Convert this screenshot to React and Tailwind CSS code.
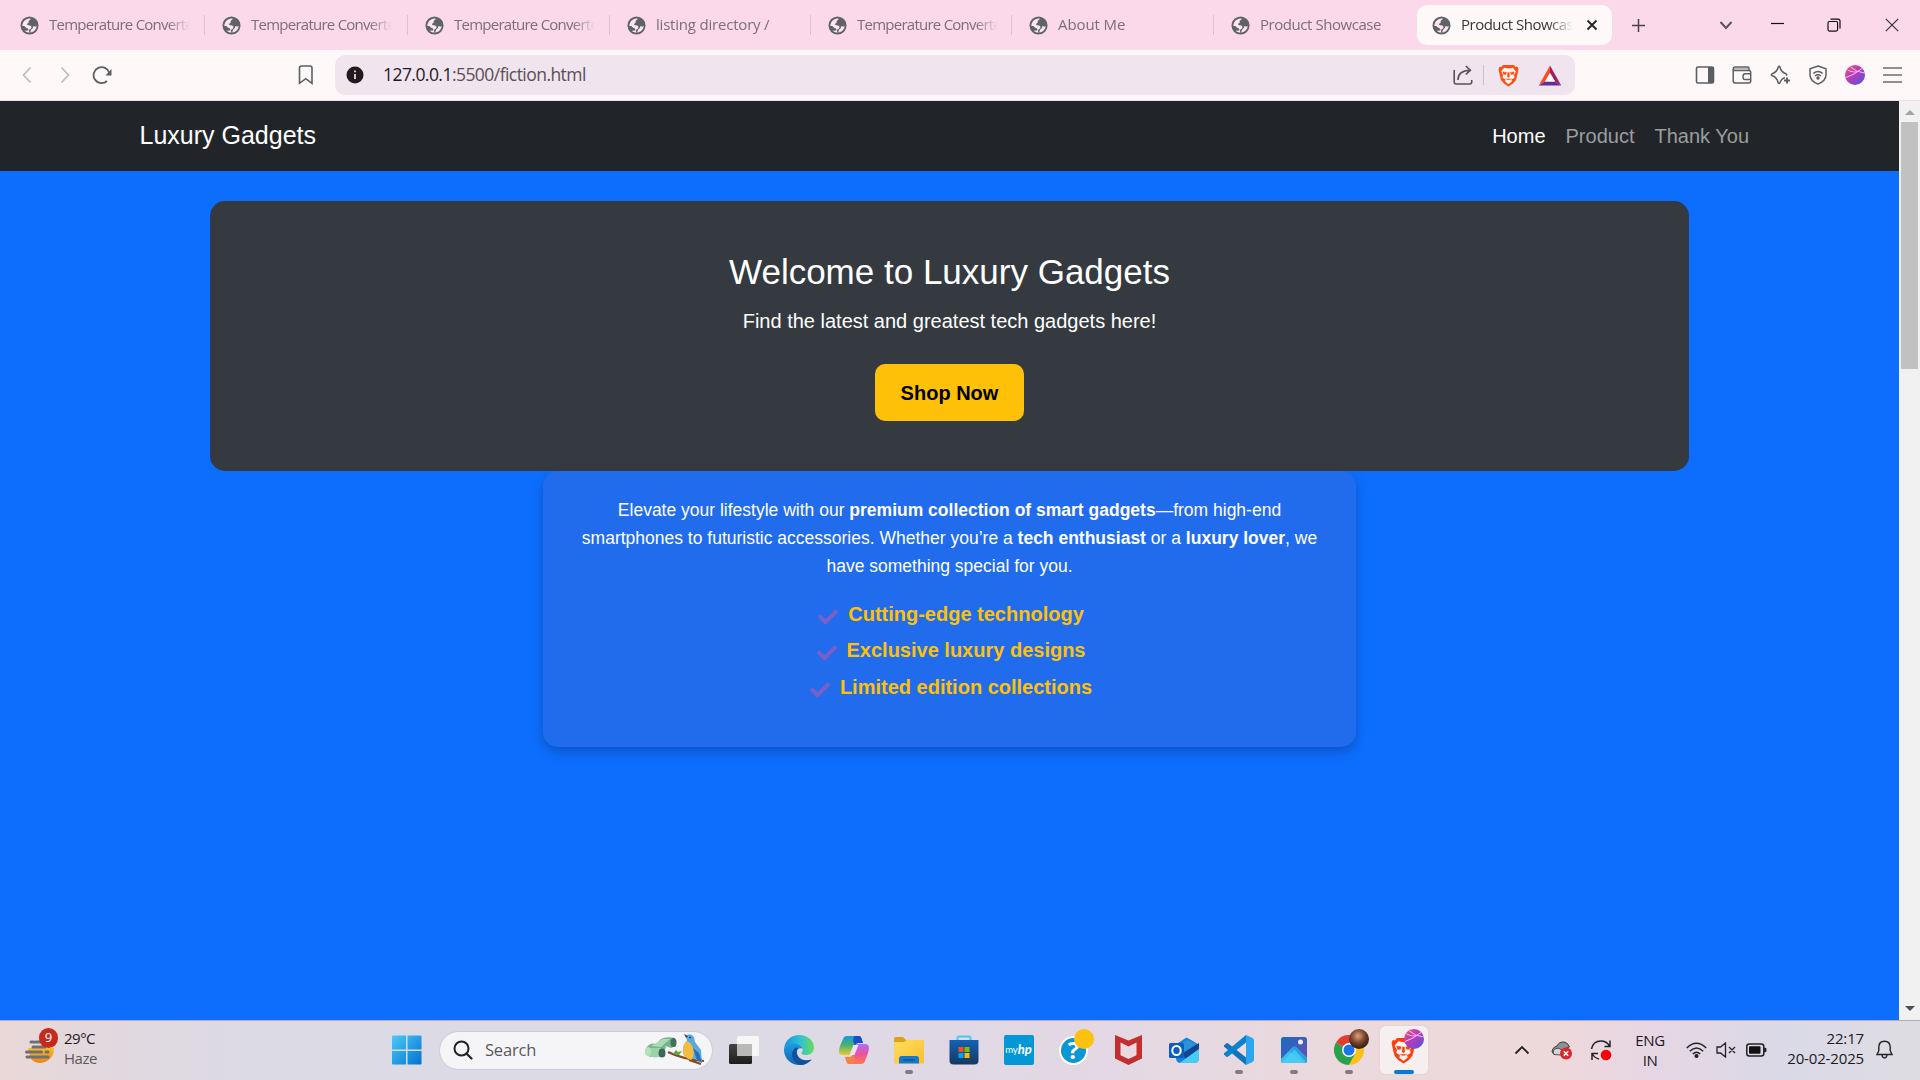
import React from "react";
import { FaCheck } from "react-icons/fa";

const tabs = [
  { t: "Temperature Converter", w: "w-[205px] pl-[20px]", k: "tracking-[-0.75px]" },
  { t: "Temperature Converter", w: "w-[203px] pl-[17px]", k: "tracking-[-0.75px]" },
  { t: "Temperature Converter", w: "w-[202px] pl-[17px]", k: "tracking-[-0.75px]" },
  { t: "listing directory /", w: "w-[201px] pl-[17px]", k: "tracking-[-0.2px]" },
  { t: "Temperature Converter", w: "w-[201px] pl-[17px]", k: "tracking-[-0.75px]" },
  { t: "About Me", w: "w-[202px] pl-[17px]", k: "tracking-[-0.1px]" },
  { t: "Product Showcase", w: "w-[203px] pl-[17px]", k: "tracking-[-0.45px]", last: true },
];

function Globe() {
  return (
    <svg className="h-[19px] w-[19px] shrink-0" viewBox="0 0 24 24">
      <circle cx="12" cy="12" r="11.4" fill="#5f6368" />
      <path d="M3 12.500C3 7.500 6.800 3.500 12 3.100L13.600 3.600C13.400 5 11.600 5.200 11 6.200C10.500 7.200 11.600 8 10.600 8.900C9.600 9.600 8.900 9.500 9 10.700C9.100 12 11 11.300 12.600 11.900C14.200 12.400 14.700 13.400 14.300 15C13.900 16.400 12.400 16.100 11.700 17.300C11.100 18.600 11.400 19.700 12 20.800C10 21 7.500 20 5.900 18.500L10.400 18.200C11 16.700 10 15.300 8.500 15C6.500 14.600 6.800 12.800 5 12.500ZM13 20.800C17.600 20.300 21 16.700 21 12.200C19.700 13.900 18 13.500 17.200 12.300C16.600 14 16.500 15 15.300 16C14 17 13.400 18 13 20.800Z" fill="#fbe6f0" />
    </svg>
  );
}

function Tab({ t, w, k, last }) {
  return (
    <div className={"flex h-[40px] shrink-0 items-center " + w}>
      <Globe />
      <span className={"ml-[10px] w-[141px] shrink-0 overflow-hidden whitespace-nowrap pb-[2px] text-[15px] text-[#7b7077] [mask-image:linear-gradient(to_right,black_84%,transparent)] " + k}>{t}</span>
      <span className={"ml-auto h-5 w-px " + (last ? "" : "bg-[#d9c3cf]")} />
    </div>
  );
}

function TabStrip() {
  return (
    <header className="flex h-[50px] shrink-0 items-center bg-[#fbd9ea] font-['Open_Sans',sans-serif]">
      {tabs.map((t, i) => <Tab key={i} {...t} />)}
      <div className="flex h-[40px] w-[195px] shrink-0 items-center rounded-[10px] bg-[#fff8f8] pl-[15px]">
        <Globe />
        <span className="ml-[10px] w-[112px] shrink-0 overflow-hidden whitespace-nowrap pb-[2px] text-[15px] tracking-[-0.5px] text-[#3b3438] [mask-image:linear-gradient(to_right,black_78%,transparent)]">Product Showcase</span>
        <svg className="ml-[13px] h-[12px] w-[12px]" viewBox="0 0 12 12"><path d="M1.500 1.500l9 9M10.500 1.500l-9 9" stroke="#2c282a" strokeWidth="2" /></svg>
      </div>
      <svg className="ml-[19px] h-[15px] w-[15px] shrink-0" viewBox="0 0 15 15"><path d="M7.500 1v13M1 7.500h13" stroke="#4a4247" strokeWidth="1.500" /></svg>
      <svg className="ml-[73px] h-[14px] w-[14px] shrink-0" viewBox="0 0 14 14"><path d="M1.500 4l5.500 6 5.500-6" fill="none" stroke="#5b5358" strokeWidth="2" /></svg>
      <svg className="ml-[38px] h-[14px] w-[13px] shrink-0" viewBox="0 0 13 14"><path d="M0 5.500h13" stroke="#111" strokeWidth="1.200" /></svg>
      <svg className="ml-[43px] h-[14px] w-[14px] shrink-0" viewBox="0 0 14 14" fill="none" stroke="#111" strokeWidth="1.200"><rect x="1" y="3.500" width="9.600" height="9.600" rx="1.500" /><path d="M3.500 1.100h7.500c1.200 0 2 .8 2 2v7.500" /></svg>
      <svg className="ml-[44px] h-[14px] w-[14px] shrink-0" viewBox="0 0 14 14"><path d="M.8.800l12.400 12.400M13.200.800L.8 13.200" stroke="#333" strokeWidth="1.200" /></svg>
    </header>
  );
}

function Avatar({ className, id }) {
  return (
    <svg className={className} viewBox="0 0 20 20">
      <defs><linearGradient id={id} x1="0" y1="0" x2="1" y2="1"><stop offset="0" stopColor="#f2557a" /><stop offset=".45" stopColor="#b83ab8" /><stop offset="1" stopColor="#4f55e0" /></linearGradient></defs>
      <circle cx="10" cy="10" r="10" fill={"url(#" + id + ")"} />
      <path d="M1 12.500Q9 10 17 3.500M5.500 2Q11 7 19.500 8M2.500 5Q9 8 13 6.500" stroke="#f3c4ee" strokeWidth="1" fill="none" />
    </svg>
  );
}

function Lion({ className, color }) {
  return (
    <svg className={className} viewBox="0 0 21 23">
      <path d="M5 1h11l1.500 2 2-.3L20.500 5 20 8l-2 8-3 3.500-4.500 3-4.500-3L3 16 1 8 .5 5l1-2.300 2 .3z" fill={color} />
      <path d="M6.200 3.800l4.300.7 4.300-.7 3.200 3.700-2 3.500.5 2.700-3 1.800.5 2-3.500 2.800L7 17.500l.5-2-3-1.800.5-2.700-2-3.500z" fill="#fff3ee" />
      <path d="M4.800 7.800l3.700.6-.5 2-2.500.2zM16.200 7.800l-3.700.6.500 2 2.500.2zM9.700 8.500h1.600l.4 4-1.200 1-1.200-1zM7.300 14.700l3.200 1.300 3.200-1.300" fill={color} stroke={color} strokeWidth=".3" />
    </svg>
  );
}

function Toolbar() {
  return (
    <div className="flex h-[51px] shrink-0 items-center border-b border-[#f6dde4] bg-[#fff8f8] font-['Open_Sans',sans-serif]">
      <svg className="ml-[22px] h-[18px] w-[10px] shrink-0" viewBox="0 0 10 18"><path d="M8.500 1.500L1.500 9l7 7.500" fill="none" stroke="#c0babc" strokeWidth="1.700" /></svg>
      <svg className="ml-[28px] h-[18px] w-[10px] shrink-0" viewBox="0 0 10 18"><path d="M1.500 1.500L8.500 9l-7 7.500" fill="none" stroke="#c0babc" strokeWidth="1.700" /></svg>
      <svg className="ml-[22px] h-[20px] w-[20px] shrink-0" viewBox="0 0 20 20"><path d="M17.300 8A8 8 0 1 0 15 16" fill="none" stroke="#5b5f64" strokeWidth="1.800" /><path d="M19.500 4v6.500h-6z" fill="#5b5f64" /></svg>
      <svg className="ml-[186px] h-[20px] w-[16px] shrink-0" viewBox="0 0 16 20"><path d="M1.500 3q0-2 2-2h8.500q2 0 2 2v15.300l-6.200-4.600-6.300 4.600z" fill="none" stroke="#5b5f64" strokeWidth="1.600" /></svg>
      <div className="ml-[21px] flex h-[40px] w-[1240px] shrink-0 items-center rounded-[10px] bg-[#f0e4ee] pl-[11px] pr-[13px]">
        <svg className="h-[18px] w-[18px]" viewBox="0 0 18 18"><circle cx="9" cy="9" r="8.500" fill="#231a1f" /><path d="M9 8v5M9 4.500v1.800" stroke="#f0e4ee" strokeWidth="1.700" /></svg>
        <span className="ml-[19px] pb-[2px] text-[17.500px] tracking-[-0.55px] text-[#5a4f56]"><span className="text-[#231a1f]">127.0.0.1</span>:5500/fiction.html</span>
        <svg className="ml-auto h-[20px] w-[20px]" viewBox="0 0 20 20" fill="none" stroke="#5a5157" strokeWidth="1.600"><path d="M1.200 5v12q0 2 2 2h13.500q2 0 2-2v-2M5 15Q5 5.500 17 5.200M12.800 1l4.600 4.200-4.600 4.300" /></svg>
        <span className="ml-[10px] h-5 w-px bg-[#cbbfc9]" />
        <Lion className="ml-[14px] h-[23px] w-[21px]" color="#fb4f14" />
        <svg className="ml-[19px] h-[21px] w-[24px]" viewBox="0 0 24 21"><path d="M12 .5L.8 20.500 7 16.500 12 8z" fill="#ff4724" /><path d="M12 .5L23.200 20.500 17 16.500 12 8z" fill="#9e1f63" /><path d="M.8 20.500h22.400L17 16.500H7z" fill="#662d91" /><path d="M12 8l5 8.500H7z" fill="#fff" /></svg>
      </div>
      <svg className="ml-[120px] h-[18px] w-[20px] shrink-0" viewBox="0 0 20 18"><rect x="1.500" y="1" width="17" height="16" rx="1.500" fill="none" stroke="#5b5f64" strokeWidth="1.600" /><path d="M13 1h5.500v16H13z" fill="#5b5f64" /></svg>
      <svg className="ml-[17px] h-[18px] w-[20px] shrink-0" viewBox="0 0 20 18" fill="none" stroke="#5b5f64" strokeWidth="1.500"><path d="M1.200 3v12q0 2 2 2h13.500q2 0 2-2V6.500q0-2-2-2H3q-1.800 0-1.800-1.700T3 1h12.500q1.500 0 1.500 1.500v2M18.500 7.800H13q-2 0-2 2.900t2 2.900h5.500" /><path d="M2 2.800h14" stroke="#aeb0b2" /></svg>
      <svg className="ml-[18px] h-[20px] w-[22px] shrink-0" viewBox="0 0 22 20" fill="none" stroke="#5b5f64" strokeWidth="1.500" strokeLinejoin="round"><path d="M15 12.500q-3 1-4.300 3.500L9.800 18q-.8 1-1.600 0C7.500 14 5.500 11.800 2 10.500q-1.300-.8 0-1.600C5.500 7.500 7.500 5.500 8.300 2q.8-1.300 1.600 0 1.200 5 6.200 6.900 1.300.8 0 1.600" /><path d="M17 12.500v6M14 15.500h6" strokeWidth="1.900" /></svg>
      <svg className="ml-[17px] h-[20px] w-[18px] shrink-0" viewBox="0 0 18 20" fill="none" stroke="#5b5f64" strokeWidth="1.500"><path d="M9 1l8 2.800v6q0 6-8 9.300-8-3.300-8-9.300v-6z" /><path d="M4.300 8.500Q9 4.500 13.700 8.500M6 11q3-2.400 6 0" /><circle cx="9" cy="13" r="1" fill="#5b5f64" /></svg>
      <Avatar id="avatarBar" className="ml-[18px] h-[20px] w-[20px] shrink-0" />
      <svg className="ml-[18px] h-[18px] w-[19px] shrink-0" viewBox="0 0 19 18"><path d="M0 2h19M0 9h19M0 16h19" stroke="#6d6c6f" strokeWidth="1.600" /></svg>
    </div>
  );
}

function Perk({ children }) {
  return (
    <li className="flex h-[30px] items-center justify-center pl-[3px]">
      <FaCheck className="mr-[10px] mt-[5px] h-[20px] w-[20px] text-[#7b5fc9]" />
      <span>{children}</span>
    </li>
  );
}

function Page() {
  return (
    <div className="flex w-[1899px] flex-col items-center bg-[#0d6efd] text-white">
      <nav className="flex h-[70px] w-full shrink-0 items-center justify-between bg-[#212529] pl-[139.500px] pr-[139px]">
        <span className="text-[25px]">Luxury Gadgets</span>
        <div className="flex gap-5 pr-[11px] text-[20px] text-[#9b9d9f]"><span className="text-white">Home</span><span>Product</span><span>Thank You</span></div>
      </nav>
      <section className="mt-[30px] flex h-[270px] w-[1479px] shrink-0 flex-col items-center rounded-[15px] bg-[#343a40] pt-[50px]">
        <h1 className="text-[35px] leading-[42px]">Welcome to Luxury Gadgets</h1>
        <p className="mt-[10px] text-[20px] leading-[36px]">Find the latest and greatest tech gadgets here!</p>
        <button className="mt-[25px] h-[57px] w-[149px] rounded-[10px] bg-[#ffc107] text-[20px] font-bold text-black">Shop Now</button>
      </section>
      <section className="h-[276px] w-[813px] shrink-0 rounded-[15px] bg-[#216ced] px-[35px] pt-[25px] text-center shadow-[0_5px_12px_rgba(0,0,0,0.22)]">
        <p className="text-[17.500px] leading-[28px]">
          Elevate your lifestyle with our <b>premium collection of smart gadgets</b>—from high-end smartphones to futuristic accessories. Whether you’re a <b>tech enthusiast</b> or a <b>luxury lover</b>, we have something special for you.
        </p>
        <ul className="mt-[19px] flex flex-col text-[20px] font-bold text-[#ffc107]">
          <Perk>Cutting-edge technology</Perk>
          <div className="h-[6px]" />
          <Perk>Exclusive luxury designs</Perk>
          <div className="h-[7px]" />
          <Perk>Limited edition collections</Perk>
        </ul>
      </section>
    </div>
  );
}

function Scrollbar() {
  return (
    <div className="flex w-[21px] flex-col items-center bg-[#f1f1f1]">
      <svg className="mt-[9px] h-[5px] w-[10px]" viewBox="0 0 10 5"><path d="M5 0l5 5H0z" fill="#a3a3a3" /></svg>
      <div className="mt-[7px] h-[247px] w-[17px] bg-[#c1c1c1]" />
      <svg className="mb-[9px] mt-auto h-[5px] w-[10px]" viewBox="0 0 10 5"><path d="M0 0h10L5 5z" fill="#505050" /></svg>
    </div>
  );
}

function AppSlot({ children, dot }) {
  return (
    <div className="relative flex h-[60px] w-[55px] shrink-0 items-center justify-center">
      {children}
      {dot && <span className="absolute bottom-[6px] h-[4px] w-[8px] rounded-full bg-[#837b82]" />}
    </div>
  );
}

function TaskApps() {
  return (
    <div className="flex">
      <AppSlot>
        <svg className="h-[30px] w-[30px]" viewBox="0 0 30 30"><defs><linearGradient id="tv" x2="0" y2="1"><stop stopColor="#454545" /><stop offset="1" stopColor="#1c1c1a" /></linearGradient></defs><rect x="0" y="9" width="23" height="20" rx="1.500" fill="url(#tv)" /><rect x="8" y="1" width="22" height="20" rx="1.500" fill="#f6f6f6" /><path d="M8 9h15v12H9.500Q8 21 8 19.500z" fill="#b9b9b8" /></svg>
      </AppSlot>
      <AppSlot>
        <svg className="h-[30px] w-[30px]" viewBox="0 0 30 30"><defs><linearGradient id="eg" x1="0" x2="1"><stop stopColor="#1a8fdc" /><stop offset=".5" stopColor="#2cc0d8" /><stop offset="1" stopColor="#66db5c" /></linearGradient><linearGradient id="eb" x2="0" y2="1"><stop stopColor="#1f9bdd" /><stop offset="1" stopColor="#1263b8" /></linearGradient></defs><path d="M0 14C1 5 7.500 0 15 0c9 0 15 6 15 12.500 0 5-4 7.500-8 7.500-3 0-4.500-1-4.500-2s1.300-1.500 1.300-3.500c0-3-3.300-5.500-8.300-5.500C5 9 1 11 0 14z" fill="url(#eg)" /><path d="M0 14c1.500-3.500 5-5.500 9.500-5.500 4.500 0 8.500 2 9.300 5.500-1.500-1.500-6-1.500-6 3.500 0 5 4.500 8 9 8 2.500 0 5-1 5.700-1C25 28 20.500 30 15.500 30 7 30-.5 23.500 0 14z" fill="url(#eb)" /><path d="M12 12.500c-3 2-5 6-3.500 10.500 1.500 4 5 6.500 8.500 7 4-.3 8-2.500 10.500-5.500-7 2.500-14-.5-14.700-7-.2-2 .6-3.500 1.500-4.500z" fill="#0c539b" /></svg>
      </AppSlot>
      <AppSlot>
        <svg className="h-[30px] w-[30px]" viewBox="0 0 30 30"><defs><linearGradient id="ca" x2="0" y2="1"><stop stopColor="#179bd8" /><stop offset=".45" stopColor="#43b077" /><stop offset="1" stopColor="#e9cb27" /></linearGradient><linearGradient id="cb" x2="0" y2="1"><stop stopColor="#b06bf5" /><stop offset=".5" stopColor="#e9549c" /><stop offset="1" stopColor="#ff7a48" /></linearGradient></defs><path d="M8 1h12c1.500 0 2 1 2.500 2.500L24 8h-5c-2 0-2.500 1-3 2.500L12.500 20H4C0 20-1 17 1 11l3-7c.7-2 2-3 4-3z" fill="url(#ca)" /><path d="M15 1h5c1.500 0 2 1 2.500 2.500L24 8h-5q-2 0-3 2.500L14 6z" fill="#1550c8" /><path d="M22 29H10c-1.500 0-2-1-2.500-2.500L6 22h5c2 0 2.500-1 3-2.500L17.500 9H26c4 0 5 3 3 9l-3 8c-.7 2-2 3-4 3z" fill="url(#cb)" /><path d="M6 22h5q2 0 3-2.500l2 5-1.500 4.500H10c-1.500 0-2-1-2.500-2.500z" fill="#f98243" /><path d="M14.500 10h5l-4 10h-5z" fill="#eee3f0" /></svg>
      </AppSlot>
      <AppSlot dot>
        <svg className="h-[30px] w-[30px]" viewBox="0 0 30 30"><defs><linearGradient id="fx" x2="1" y2="1"><stop stopColor="#ffdc60" /><stop offset="1" stopColor="#fcc02c" /></linearGradient></defs><path d="M0 3.500Q0 2 1.500 2H9l3 3h16q2 0 2 2v3H0z" fill="#e0a015" /><path d="M0 7h10l3-2h15.500Q30 5 30 6.500V27q0 1.500-1.500 1.500h-27Q0 28.500 0 27z" fill="url(#fx)" /><path d="M5 28.500v-5q0-2.500 2.500-2.500h15q2.500 0 2.500 2.500v5z" fill="#1578cc" /><path d="M9 25h12" stroke="#0b4d91" strokeWidth="1.300" /></svg>
      </AppSlot>
      <AppSlot>
        <svg className="h-[30px] w-[30px]" viewBox="0 0 30 30"><defs><linearGradient id="st" x2="0" y2="1"><stop stopColor="#1263b5" /><stop offset="1" stopColor="#17365f" /></linearGradient></defs><path d="M8.500 6V3q0-1.500 1.500-1.500h10q1.500 0 1.500 1.500v3" fill="none" stroke="#4cc7f2" strokeWidth="2" /><path d="M.5 5h29v20.500q0 4-4 4h-21q-4 0-4-4z" fill="url(#st)" /><path d="M9.500 12H14.500v5h-5z" fill="#f25022" /><path d="M15.500 12H20.500v5h-5z" fill="#7fba00" /><path d="M9.500 18H14.500v5h-5z" fill="#00a4ef" /><path d="M15.500 18H20.500v5h-5z" fill="#ffb900" /></svg>
      </AppSlot>
      <AppSlot>
        <div className="flex h-[30px] w-[30px] items-center justify-center whitespace-nowrap rounded-[2px] bg-[#0397d7] text-white"><span className="font-['Lato',sans-serif] text-[9.500px]">my</span><span className="font-['Lato',sans-serif] text-[13px] font-bold italic">hp</span></div>
      </AppSlot>
      <AppSlot>
        <div className="flex h-[29px] w-[29px] items-center justify-center rounded-full border-2 border-white bg-[#0d96d4] font-['Open_Sans',sans-serif] text-[24px] font-bold leading-none text-white">?</div>
        <span className="absolute left-[28px] top-[9px] h-[20px] w-[20px] rounded-full bg-[#fdc10f]" />
      </AppSlot>
      <AppSlot>
        <svg className="h-[30px] w-[27px]" viewBox="0 0 27 30"><path d="M0 0l13.500 5.500L27 0v23.500L13.500 30 0 23.500z" fill="#c1302f" /><path d="M5.500 7.500l8 4 8-4v12.800L13.500 24l-8-3.700z" fill="#ead9e0" /></svg>
      </AppSlot>
      <AppSlot>
        <svg className="h-[26px] w-[30px]" viewBox="0 0 30 26"><path d="M6 8L17.500.5Q30 7 30 9v12q0 5-5 5H12q-5 0-5-5z" fill="#1583d8" /><path d="M7 12l11-9 9.500 4L12 17z" fill="#2d92dc" /><path d="M14 16L30 6v6L16 22z" fill="#11468d" /><path d="M30 12v9q0 5-5 5H10.500z" fill="#46cdf5" /><rect x="0" y="6" width="15" height="15" rx="1.500" fill="#0a5fbe" /><ellipse cx="7.500" cy="13.500" rx="4.200" ry="4.600" fill="none" stroke="#fff" strokeWidth="2" /></svg>
      </AppSlot>
      <AppSlot dot>
        <svg className="h-[30px] w-[30px]" viewBox="0 0 30 30"><path d="M0 10.500l2-2q1-.8 2.200 0L24 24l-2 6L.4 12q-.8-.8-.4-1.500z" fill="#1173b8" /><path d="M0 19.500l2 2q1 .8 2.200 0L24 6l-2-6L.4 18q-.8.800-.4 1.500z" fill="#0a82cc" /><path d="M22 0l6.500 3Q30 3.800 30 5.500v19q0 1.700-1.500 2.500L22 30z" fill="#2ba5ee" /><path d="M22 8.500v13L13.500 15z" fill="#ecdce2" /></svg>
      </AppSlot>
      <AppSlot dot>
        <svg className="h-[26px] w-[26px]" viewBox="0 0 26 26"><defs><linearGradient id="ph" x2="1" y2="1"><stop stopColor="#156dc4" /><stop offset="1" stopColor="#6d4dae" /></linearGradient></defs><rect width="26" height="26" rx="2.500" fill="url(#ph)" /><path d="M0 22L11.500 10.500q2-2 4 0L26 21v2.500q0 2.500-2.500 2.500h-21Q0 26 0 23z" fill="#35bff2" /><path d="M13.500 9q1 .5 2 1.500L26 21v2.500q0 2.500-2.500 2.500L9 15z" fill="#1f94dd" opacity=".7" /><path d="M1 25L13.500 12.500 25 25q-1 1-2 1H3q-1 0-2-1z" fill="#4fd3f8" opacity=".7" /><circle cx="19.500" cy="5" r="2.500" fill="#f5e9f5" /></svg>
      </AppSlot>
      <AppSlot dot>
        <svg className="h-[30px] w-[30px]" viewBox="0 0 30 30"><path d="M15 15L2 7.500A15 15 0 0 1 28 7.500H15z" fill="#e33b2e" /><path d="M15 15L2 7.500A15 15 0 0 0 15 30l6.500-11.250z" fill="#2aa14a" /><path d="M15 7.500h13A15 15 0 0 1 15 30l6.500-11.250z" fill="#fbc116" /><circle cx="15" cy="15" r="7" fill="#fff" /><circle cx="15" cy="15" r="5.500" fill="#1b74e8" /></svg>
        <span className="absolute left-[28px] top-[9px] h-[20px] w-[20px] rounded-full bg-[radial-gradient(circle_at_45%_35%,#e0a27c,#7a452b_40%,#24150f_80%)]" />
      </AppSlot>
      <AppSlot>
        <div className="flex h-[48px] w-[48px] items-center justify-center rounded-[5px] bg-[#f6eff0] shadow-[0_0_1px_#bba]">
          <Lion className="h-[29px] w-[25px]" color="#fb3f10" />
        </div>
        <Avatar id="avatarTask" className="absolute left-[28px] top-[9px] h-[20px] w-[20px]" />
        <span className="absolute bottom-[6px] h-[4px] w-[20px] rounded-full bg-[#0a78d4]" />
      </AppSlot>
    </div>
  );
}

function Taskbar() {
  return (
    <footer className="flex h-[60px] shrink-0 items-center border-t border-[#b5a9b3] bg-[linear-gradient(to_right,#ead8d7_0%,#e2d8de_5%,#dbdae5_14%,#dcdae5_38%,#e2d8e4_56%,#ebd9dd_70%,#eed9da_80%,#e7d6e3_86%,#dad9e7_93%,#dedce2_100%)] pb-px font-['Open_Sans',sans-serif] text-[#1d1a1c]">
      <div className="relative ml-[25px] h-[40px] w-[32px] shrink-0">
        <svg className="h-[40px] w-[32px]" viewBox="0 0 32 40"><defs><linearGradient id="sun" x2="0" y2="1"><stop stopColor="#f8bb2c" /><stop offset="1" stopColor="#ef8412" /></linearGradient></defs><path d="M3 18h26a14 14 0 0 1-6 12.500 13 13 0 0 1-17-1.500z" fill="url(#sun)" /><path d="M6 12h3M11 12h8M8 17h12M1.500 22h15M21 22h2M2 27h21" stroke="#6f7076" strokeWidth="3" strokeLinecap="round" /></svg>
        <span className="absolute left-[14px] top-[-2px] flex h-[20px] w-[19px] items-center justify-center rounded-full bg-[#c42b1c] text-[13px] text-white">9</span>
      </div>
      <div className="mb-[4px] ml-[7px] w-[60px] text-[15px] leading-[20px] tracking-[-0.5px]"><div>29°C</div><div className="text-[#5c575d]">Haze</div></div>
      <svg className="ml-[268px] h-[30px] w-[30px] shrink-0" viewBox="0 0 30 30"><defs><linearGradient id="win" x2="1" y2="1"><stop stopColor="#4cc9fb" /><stop offset="1" stopColor="#0272d0" /></linearGradient></defs><path d="M0 1.500Q0 .5 1 .5h13v14H0zM15.500.5H28.500q1 0 1 1v13h-14zM0 16h14v13.500H1q-1 0-1-1zM15.500 16h14v12.500q0 1-1 1h-13z" fill="url(#win)" /></svg>
      <div className="ml-[17px] flex h-[39px] w-[274px] shrink-0 items-center rounded-full border border-[#cdcad3] bg-[#f5f5f8] pl-[13px] pr-[6px]">
        <svg className="h-[20px] w-[20px]" viewBox="0 0 20 20"><circle cx="8.500" cy="8.500" r="7" fill="none" stroke="#232224" strokeWidth="2" /><path d="M13.500 13.500l5 5" stroke="#232224" strokeWidth="2.200" strokeLinecap="round" /></svg>
        <span className="ml-[12px] text-[16.500px] tracking-[-0.2px] text-[#5b585c]">Search</span>
        <svg className="ml-auto h-[34px] w-[62px]" viewBox="0 0 62 34">
          <path d="M2 15Q6 9 12 11L17 6Q22 3 31 5L32 13 27 15 22 13 20 21Q17 25 9 24Q2 24 1 19z" fill="#79b58c" /><path d="M7 13l12-7 7 0-9 8z" fill="#a9dcb4" /><path d="M5 15h12v9H5z" fill="#9bd3a9" /><ellipse cx="18" cy="20" rx="3.500" ry="4.500" fill="#3d6656" /><ellipse cx="29.500" cy="9.500" rx="3" ry="4.500" fill="#46705e" /><ellipse cx="4" cy="18.500" rx="3" ry="4.500" fill="#b4e3ba" />
          <path d="M24 19Q38 26 60 28M45 27l12 4" stroke="#854923" strokeWidth="2.200" fill="none" /><path d="M29 21l3-4 2 2 4-1-3 4z" fill="#58a93a" />
          <path d="M42 3Q46-1 50 4L51 9 57 17 58 29 50 26Q42 27 39 20 38 13 43 8z" fill="#5aaae0" /><path d="M42 8Q47 9 49 15 51 23 47 27 40 25 39 19 39 12 42 8z" fill="#f4bd3d" /><path d="M49 15l6 5 3 10-5-3z" fill="#2a6fb4" /><path d="M40 1l4 2-2 2z" fill="#473f3c" /><circle cx="46" cy="4.500" r=".8" fill="#15202c" />
        </svg>
      </div>
      <div className="ml-[3px]"><TaskApps /></div>
      <svg className="ml-[83px] h-[10px] w-[16px] shrink-0" viewBox="0 0 16 10"><path d="M1.500 8.500L8 2l6.500 6.500" fill="none" stroke="#222" strokeWidth="1.800" /></svg>
      <svg className="ml-[21px] h-[20px] w-[22px] shrink-0" viewBox="0 0 22 20"><path d="M3 14.500Q-.5 12 2 8.500 4 6.500 6 6q2-4.500 7-4 4 .6 5.500 5L13 9Z" fill="#8d9090" stroke="#3d4040" /><path d="M3 14.500Q1 10 5 8.500q3-1 5 1l6 3-6 2.500z" fill="#d5d6d6" stroke="#4b4e4e" /><circle cx="15" cy="13.500" r="6" fill="#d42a30" /><path d="M12.800 11.300l4.400 4.400M17.200 11.300l-4.400 4.400" stroke="#fff" strokeWidth="1.500" /></svg>
      <svg className="ml-[17px] h-[22px] w-[22px] shrink-0" viewBox="0 0 22 22"><path d="M1.500 10Q3 2 11 2q5.500 0 8.500 5M20 1.500V7.500h-5.500M9 20q-4.500-1-7-5.500M2 21v-6.500h6" fill="none" stroke="#222" strokeWidth="1.500" /><circle cx="16" cy="16" r="5.300" fill="#fb0007" /></svg>
      <div className="mb-px ml-[17px] w-[42px] text-center text-[15px] leading-[20px] tracking-[-0.4px]"><div>ENG</div><div>IN</div></div>
      <svg className="ml-[15px] h-[16px] w-[21px] shrink-0" viewBox="0 0 21 16" fill="none" stroke="#222" strokeWidth="1.500"><path d="M.8 6Q10.500-3.500 20.200 6M3.800 9.200q6.700-6.500 13.400 0M6.800 12q3.700-3.500 7.400 0" /><circle cx="10.500" cy="14" r="1.300" fill="#222" /></svg>
      <svg className="ml-[9px] h-[16px] w-[20px] shrink-0" viewBox="0 0 20 16" fill="none" stroke="#222" strokeWidth="1.300"><path d="M1 5h3.500L9.500 1v14l-5-4H1zM13 5l6 6M19 5l-6 6" /></svg>
      <svg className="ml-[10px] h-[14px] w-[21px] shrink-0" viewBox="0 0 21 14"><rect x=".8" y="1" width="17" height="12" rx="2.500" fill="none" stroke="#222" strokeWidth="1.500" /><rect x="3" y="3.200" width="11.500" height="7.600" rx="1" fill="#111" /><path d="M18 4.800h1.500q1 0 1 2.200t-1 2.200H18z" fill="#222" /></svg>
      <div className="mb-[4px] ml-[12px] w-[85px] shrink-0 whitespace-nowrap text-right text-[15px] leading-[20px] tracking-[-0.15px]"><div>22:17</div><div>20-02-2025</div></div>
      <svg className="ml-[12px] h-[20px] w-[17px] shrink-0" viewBox="0 0 17 20" fill="none" stroke="#222" strokeWidth="1.400"><path d="M1 14.500l1.800-3.800V7Q3 1.200 8.500 1.200T14.200 7v3.700L16 14.500zM6 15q.5 3 2.500 3t2.500-3" /></svg>
    </footer>
  );
}

export default function App() {
  return (
    <div className="flex h-[1080px] w-[1920px] flex-col overflow-hidden font-['Liberation_Sans',sans-serif]">
      <TabStrip />
      <Toolbar />
      <main className="flex h-[919px] shrink-0">
        <Page />
        <Scrollbar />
      </main>
      <Taskbar />
    </div>
  );
}
